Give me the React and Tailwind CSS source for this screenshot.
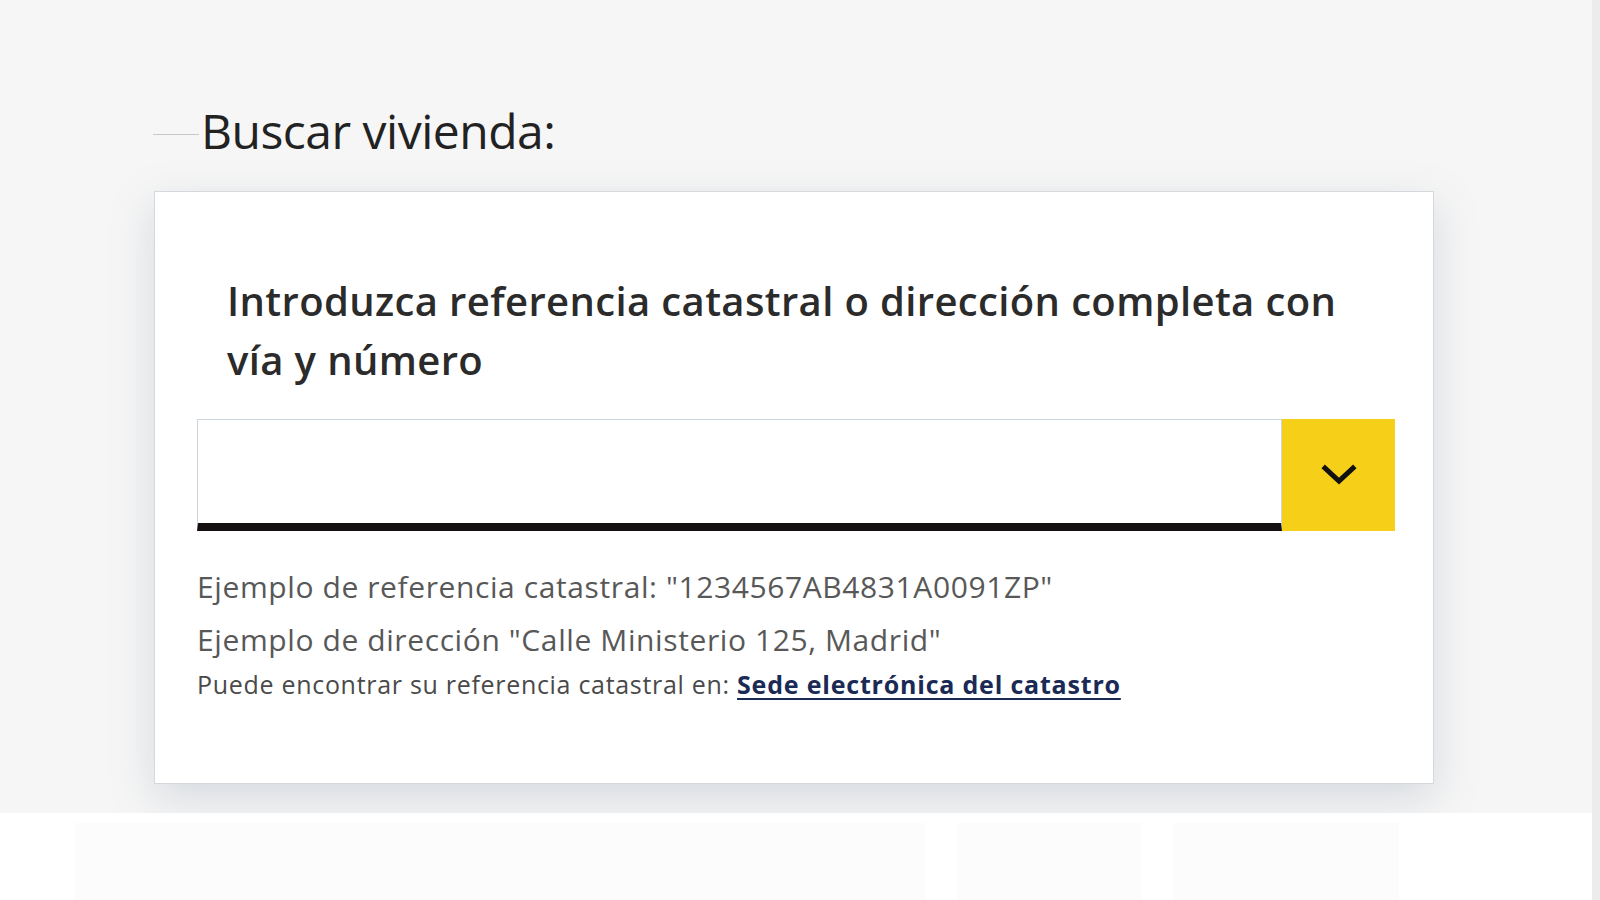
import React from 'react';

const ChevronDown = () => (
  <svg width="36" height="22" viewBox="0 0 36 22" fill="none">
    <path d="M4 4l14 13L32 4" stroke="#111" strokeWidth="5" strokeLinecap="square" />
  </svg>
);

const App = () => {
  return (
    <div className="flex h-[900px] w-[1600px] overflow-hidden bg-white" style={{ fontFamily: '"Open Sans", "Noto Sans", sans-serif' }}>
      <div className="flex-1 flex flex-col">
        {/* Search section */}
        <div className="h-[813px] shrink-0 bg-[#f6f6f6] pt-[107px]">
          <div className="flex items-start ml-[153px] h-[48px]">
            <span className="w-[46px] h-px mt-[27px] bg-[#c8c8c8]" />
            <h2 className="ml-[2px] text-[48px] text-[#222] leading-none tracking-[-0.5px]">Buscar vivienda:</h2>
          </div>

          <div className="ml-[154px] mt-[36px] w-[1280px] h-[593px] bg-white border border-[#d5d8dc] shadow-[0_14px_40px_rgba(120,135,155,0.25)] pl-[42px] pr-[38px] pt-[79px]">
            <label className="block pl-[30px] text-[40px] leading-[59px] font-semibold tracking-[0.37px] text-[#2b2b2b]">
              Introduzca referencia catastral o dirección completa con vía y número
            </label>

            <div className="flex mt-[30px] h-[112px]">
              <div className="flex-1 border border-[#cdd5df] border-b-[8px] border-b-[#141010] bg-white" />
              <button className="w-[113px] h-[112px] bg-[#f6d018] flex items-center justify-center">
                <ChevronDown />
              </button>
            </div>

            <div className="mt-[29px] text-[#585858]">
              <p className="text-[30px] leading-[53px] tracking-[0.6px]">Ejemplo de referencia catastral: "1234567AB4831A0091ZP"</p>
              <p className="text-[30px] leading-[53px] tracking-[0.6px]">Ejemplo de dirección "Calle Ministerio 125, Madrid"</p>
              <p className="text-[25px] leading-[37px] tracking-[0.7px] text-[#4a4a4a]">
                Puede encontrar su referencia catastral en:{' '}
                <a href="#" className="font-bold text-[#1b2a55] underline underline-offset-4 tracking-[0.8px]">Sede electrónica del catastro</a>
              </p>
            </div>
          </div>
        </div>

        {/* Faded content below */}
        <div className="flex-1 bg-white flex gap-8 px-[75px] pt-[10px]">
          <div className="w-[850px] h-full bg-[#fcfcfc]" />
          <div className="w-[185px] h-full bg-[#fcfcfc]" />
          <div className="w-[225px] h-full bg-[#fcfcfc]" />
        </div>
      </div>
      <div className="w-[8px] bg-[#ececec]" />
    </div>
  );
};

export default App;
